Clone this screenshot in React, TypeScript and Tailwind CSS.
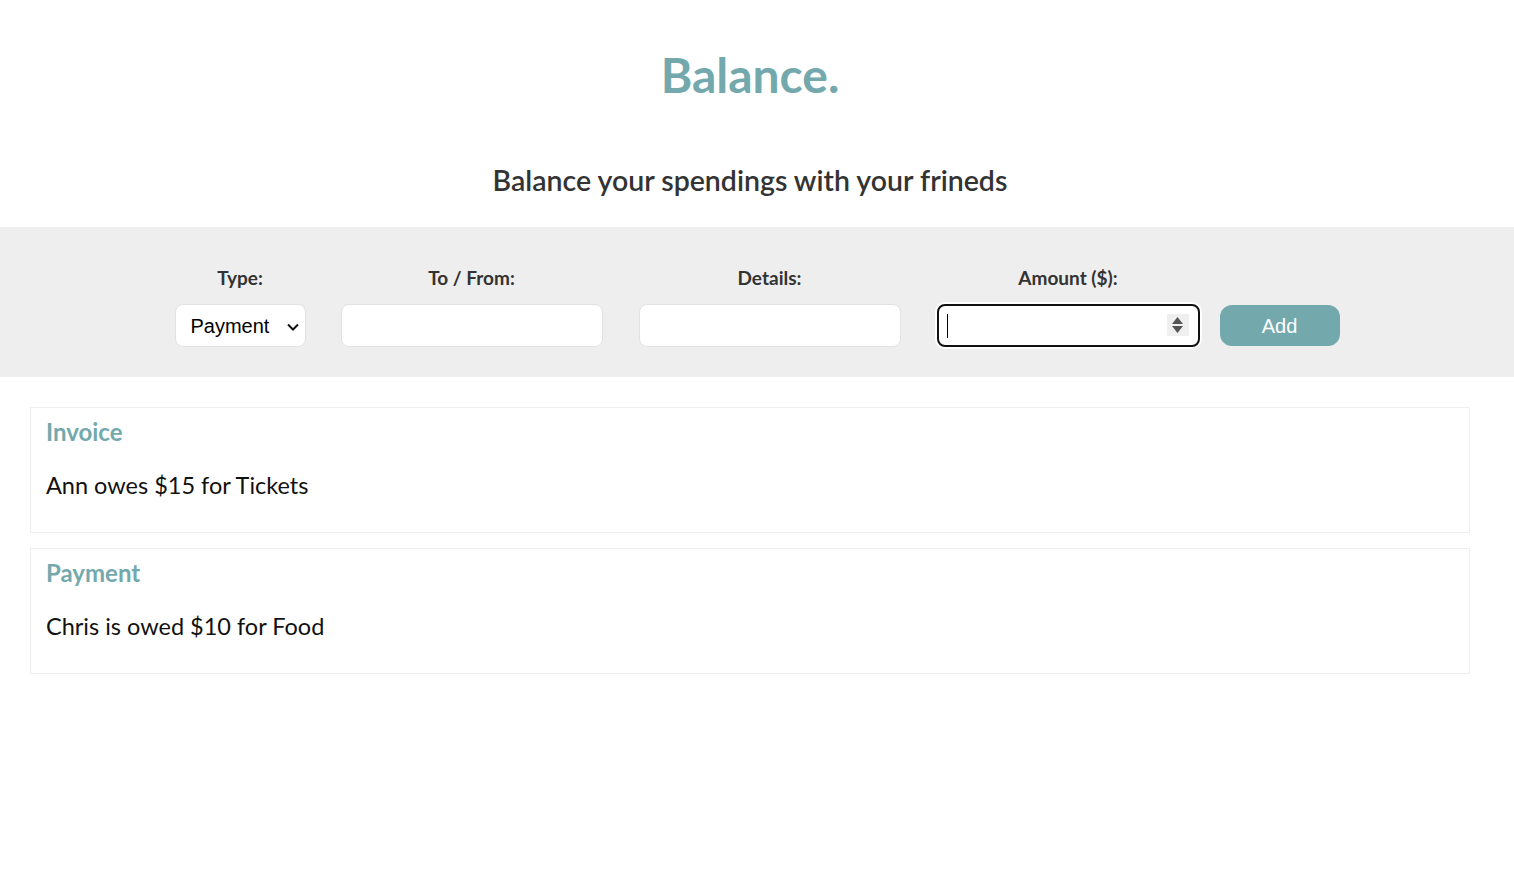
import React from 'react';

const entries = [
  { type: 'Invoice', text: 'Ann owes $15 for Tickets' },
  { type: 'Payment', text: 'Chris is owed $10 for Food' },
];

const Field: React.FC<{ label: string; children: React.ReactNode; width: string }> = ({ label, children, width }) => (
  <div className={`flex flex-col items-center ${width}`}>
    <label className="text-[19px] leading-[22px] font-bold text-[#333]">{label}</label>
    <div className="mt-[15px] w-full">{children}</div>
  </div>
);

export default function App() {
  return (
    <div className="min-h-screen bg-white font-['Lato','Noto_Sans',sans-serif]">
      {/* Header */}
      <header className="text-center pt-[46px] pr-[14px]">
        <h1 className="text-[48px] leading-[58px] font-bold text-[#73a9ad]">Balance.</h1>
        <h2 className="mt-[59px] text-[28.5px] leading-[34px] font-semibold text-[#333]">
          Balance your spendings with your frineds
        </h2>
      </header>

      {/* Form band */}
      <div className="mt-[30px] bg-[#eeeeee] h-[150px] pt-[40px] flex justify-center items-end pb-[30px]">
        <div className="flex items-end">
          <Field label="Type:" width="w-[131px]">
            <div className="relative h-[43px] bg-white rounded-[8px] border border-[#e2e2e2] flex items-center pl-[15px] font-['Liberation_Sans',Arial,sans-serif] text-[20px] text-black">
              Payment
              <svg className="absolute right-[5px] top-[15px]" width="14" height="14" viewBox="0 0 14 14">
                <path d="M2 4.5 L7 9.5 L12 4.5" fill="none" stroke="#111" strokeWidth="2" />
              </svg>
            </div>
          </Field>
          <div className="ml-[35px]">
            <Field label="To / From:" width="w-[262px]">
              <div className="h-[43px] bg-white rounded-[8px] border border-[#e2e2e2]" />
            </Field>
          </div>
          <div className="ml-[36px]">
            <Field label="Details:" width="w-[262px]">
              <div className="h-[43px] bg-white rounded-[8px] border border-[#e2e2e2]" />
            </Field>
          </div>
          <div className="ml-[36px]">
            <Field label="Amount ($):" width="w-[263px]">
              <div className="relative h-[43px] bg-white rounded-[8px] border-2 border-[#111] ring-2 ring-white flex items-center">
                <span className="ml-[8px] w-px h-[24px] bg-black" />
                <div className="absolute right-[9px] top-[8px] w-[22px] h-[22px] bg-[#efefef] flex flex-col items-center justify-center gap-[2px]">
                  <svg width="11" height="7" viewBox="0 0 11 7"><path d="M0 7 L5.5 0 L11 7 Z" fill="#555" /></svg>
                  <svg width="11" height="7" viewBox="0 0 11 7"><path d="M0 0 L5.5 7 L11 0 Z" fill="#555" /></svg>
                </div>
              </div>
            </Field>
          </div>
          <button className="ml-[20px] mb-px w-[120px] h-[41px] rounded-[12px] bg-[#73a9ad] text-white text-[20px] font-['Liberation_Sans',Arial,sans-serif]">
            Add
          </button>
        </div>
      </div>

      {/* Entries */}
      <div className="mt-[30px] ml-[30px] w-[1440px] flex flex-col gap-[15px]">
        {entries.map((e) => (
          <div key={e.type} className="border border-[#eeeeee] h-[126px] px-[15px] pt-[9px]">
            <h3 className="text-[24px] leading-[29px] font-bold text-[#73a9ad]">{e.type}</h3>
            <p className="mt-[25px] text-[23.5px] leading-[29px] text-[#111]">{e.text}</p>
          </div>
        ))}
      </div>
    </div>
  );
}
